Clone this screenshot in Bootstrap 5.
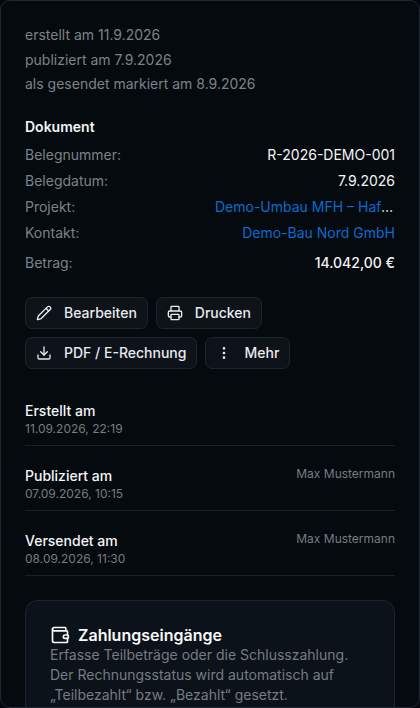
<!DOCTYPE html>
<html lang="de">
<head>
<meta charset="utf-8">
<title>Rechnung</title>
<link href="https://cdn.jsdelivr.net/npm/bootstrap@5.3.0/dist/css/bootstrap.min.css" rel="stylesheet">
<style>
html,body{height:708px;overflow:hidden;background:#04070b;}
body{font-family:"Inter","Liberation Sans",sans-serif;font-size:14px;color:#f4f5f6;}
.shell{height:708px;overflow:hidden;background:#050a0f;border:1px solid #1f2a35;border-radius:10px;padding:22px 24px 0;}
.metaline{color:#7d8288;line-height:24.5px;}
.sect-title{font-weight:600;line-height:20px;margin-top:20px;margin-bottom:5px;color:#f4f5f6;}
.kv{height:26px;line-height:26px;}
.kv-label{color:#7d8288;flex:none;}
.kv-val{color:#f4f5f6;min-width:0;}
.kv-clip{max-width:180px;}
.kv-link{color:#0a6cd0;text-decoration:none;}
.kv-amt{margin-top:4px;}
.kv-amt .kv-val{font-weight:500;}
.acts{margin-top:21px;margin-bottom:12px;}
.act{display:inline-flex;align-items:center;gap:12px;height:32px;padding:0 10px;background:#0e131a;border:1px solid #1d242d;border-radius:7px;color:#e8eaec;font-size:14px;font-weight:500;line-height:20px;}
.act:hover{background:#0e131a;color:#e8eaec;border-color:#1d242d;}
.act svg{width:16px;height:16px;flex:none;}
.tl-row{height:65px;border-bottom:1px solid #1a2027;padding-top:20px;}
.tl-name{font-weight:500;line-height:20px;color:#f4f5f6;}
.tl-date{font-size:12px;line-height:16px;color:#777c82;}
.tl-who{font-size:12px;line-height:16px;color:#777c82;}
.pay{background:#0c1219;border:1px solid #1c2530;border-radius:12px;padding:24px;margin-top:24px;}
.pay-title{font-size:16px;font-weight:600;line-height:20px;color:#f8f9fa;}
.pay-text{color:#777c82;line-height:20px;margin:0;}
.pay svg{width:20px;height:20px;flex:none;}
</style>
</head>
<body>
<div class="shell">
  <div class="metaline">erstellt am 11.9.2026</div>
  <div class="metaline">publiziert am 7.9.2026</div>
  <div class="metaline">als gesendet markiert am 8.9.2026</div>

  <div class="sect-title">Dokument</div>
  <div class="kv d-flex justify-content-between"><span class="kv-label">Belegnummer:</span><span class="kv-val">R-2026-DEMO-001</span></div>
  <div class="kv d-flex justify-content-between"><span class="kv-label">Belegdatum:</span><span class="kv-val">7.9.2026</span></div>
  <div class="kv d-flex justify-content-between"><span class="kv-label">Projekt:</span><span class="kv-val kv-clip text-truncate"><a class="kv-link" href="#">Demo-Umbau MFH – Hafenstrasse</a></span></div>
  <div class="kv d-flex justify-content-between"><span class="kv-label">Kontakt:</span><span class="kv-val kv-clip text-truncate"><a class="kv-link" href="#">Demo-Bau Nord GmbH</a></span></div>
  <div class="kv kv-amt d-flex justify-content-between"><span class="kv-label">Betrag:</span><span class="kv-val">14.042,00 €</span></div>

  <div class="acts d-flex flex-wrap gap-2">
    <button type="button" class="btn act"><svg viewBox="0 0 24 24" fill="none" stroke="currentColor" stroke-width="2" stroke-linecap="round" stroke-linejoin="round"><path d="M21.2 6.8a2.8 2.8 0 0 0-4-4L3.8 16.2a2 2 0 0 0-.5.8l-1.3 4.4a.5.5 0 0 0 .6.6l4.4-1.3a2 2 0 0 0 .8-.5z"/><path d="m15 5 4 4"/></svg>Bearbeiten</button>
    <button type="button" class="btn act"><svg viewBox="0 0 24 24" fill="none" stroke="currentColor" stroke-width="2" stroke-linecap="round" stroke-linejoin="round"><path d="M6 18H4a2 2 0 0 1-2-2v-5a2 2 0 0 1 2-2h16a2 2 0 0 1 2 2v5a2 2 0 0 1-2 2h-2"/><path d="M6 9V3a1 1 0 0 1 1-1h10a1 1 0 0 1 1 1v6"/><rect x="6" y="14" width="12" height="8" rx="1"/></svg>Drucken</button>
    <button type="button" class="btn act"><svg viewBox="0 0 24 24" fill="none" stroke="currentColor" stroke-width="2" stroke-linecap="round" stroke-linejoin="round"><path d="M12 15V3"/><path d="M21 15v4a2 2 0 0 1-2 2H5a2 2 0 0 1-2-2v-4"/><path d="m7 10 5 5 5-5"/></svg>PDF / E-Rechnung</button>
    <button type="button" class="btn act"><svg viewBox="0 0 24 24" fill="none" stroke="currentColor" stroke-width="2" stroke-linecap="round" stroke-linejoin="round"><circle cx="12" cy="12" r="1"/><circle cx="12" cy="5" r="1"/><circle cx="12" cy="19" r="1"/></svg>Mehr</button>
  </div>

  <div class="tl-row d-flex justify-content-between align-items-start">
    <div><div class="tl-name">Erstellt am</div><div class="tl-date">11.09.2026, 22:19</div></div>
  </div>
  <div class="tl-row d-flex justify-content-between align-items-start">
    <div><div class="tl-name">Publiziert am</div><div class="tl-date">07.09.2026, 10:15</div></div>
    <div class="tl-who">Max Mustermann</div>
  </div>
  <div class="tl-row d-flex justify-content-between align-items-start">
    <div><div class="tl-name">Versendet am</div><div class="tl-date">08.09.2026, 11:30</div></div>
    <div class="tl-who">Max Mustermann</div>
  </div>

  <div class="pay">
    <div class="d-flex align-items-center gap-2 pay-title"><svg viewBox="0 0 24 24" fill="none" stroke="currentColor" stroke-width="2" stroke-linecap="round" stroke-linejoin="round"><path d="M19 7V4a1 1 0 0 0-1-1H5a2 2 0 0 0 0 4h15a1 1 0 0 1 1 1v4h-3a2 2 0 0 0 0 4h3a1 1 0 0 0 1-1v-2a1 1 0 0 0-1-1"/><path d="M3 5v14a2 2 0 0 0 2 2h15a1 1 0 0 0 1-1v-4"/></svg>Zahlungseingänge</div>
    <p class="pay-text">Erfasse Teilbeträge oder die Schlusszahlung. Der Rechnungsstatus wird automatisch auf „Teilbezahlt“ bzw. „Bezahlt“ gesetzt.</p>
  </div>
</div>
<script src="https://cdn.jsdelivr.net/npm/bootstrap@5.3.0/dist/js/bootstrap.bundle.min.js"></script>
</body>
</html>
